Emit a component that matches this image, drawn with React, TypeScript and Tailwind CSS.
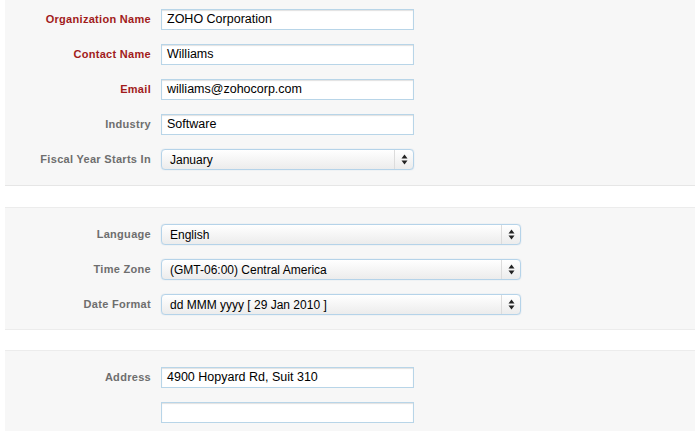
import type { ReactNode } from "react";

type Field = {
  label: string;
  value?: string;
  required?: boolean;
  kind?: "text" | "select";
  wide?: boolean;
};

const orgFields: Field[] = [
  { label: "Organization Name", value: "ZOHO Corporation", required: true },
  { label: "Contact Name", value: "Williams", required: true },
  { label: "Email", value: "williams@zohocorp.com", required: true },
  { label: "Industry", value: "Software" },
  { label: "Fiscal Year Starts In", value: "January", kind: "select" },
];

const localeFields: Field[] = [
  { label: "Language", value: "English", kind: "select", wide: true },
  { label: "Time Zone", value: "(GMT-06:00) Central America", kind: "select", wide: true },
  { label: "Date Format", value: "dd MMM yyyy [ 29 Jan 2010 ]", kind: "select", wide: true },
];

const addressFields: Field[] = [
  { label: "Address", value: "4900 Hopyard Rd, Suit 310" },
  { label: "", value: "" },
];

function UpDown() {
  return (
    <svg width="7" height="11" viewBox="0 0 7 11">
      <path d="M3.5 0.5 L6.5 4.5 L0.5 4.5 Z" fill="#222" />
      <path d="M3.5 10.5 L6.5 6.5 L0.5 6.5 Z" fill="#222" />
    </svg>
  );
}

function TextBox({ value }: { value?: string }) {
  return (
    <div className="flex h-[21px] w-[253px] items-center border border-[#b8d5e8] bg-white pl-[5px] text-[12.5px] text-black shadow-[inset_0_1px_1px_rgba(0,0,0,0.12)]">
      {value}
    </div>
  );
}

function SelectBox({ value, wide }: { value?: string; wide?: boolean }) {
  return (
    <div
      className={`flex h-[21px] items-stretch rounded-[4px] border border-[#b5d3e9] bg-gradient-to-b from-white to-[#ececec] text-[12px] text-black shadow-[0_0_1px_rgba(120,170,210,0.6)] ${
        wide ? "w-[360px]" : "w-[253px]"
      }`}
    >
      <div className="flex flex-1 items-center pl-[8px]">{value}</div>
      <div className="flex w-[19px] items-center justify-center border-l border-[#dcdcdc]">
        <UpDown />
      </div>
    </div>
  );
}

function Row({ f }: { f: Field }) {
  return (
    <>
      <div
        className={`flex h-[21px] items-center justify-end text-[11px] font-bold tracking-[0.3px] ${
          f.required ? "text-[#a11b1b]" : "text-[#6e6e6e]"
        }`}
      >
        {f.label}
      </div>
      {f.kind === "select" ? <SelectBox value={f.value} wide={f.wide} /> : <TextBox value={f.value} />}
    </>
  );
}

function Panel({ children, className = "" }: { children: ReactNode; className?: string }) {
  return (
    <div className={`mx-[5px] bg-[#f7f7f7] ${className}`}>
      <div className="grid grid-cols-[146px_1fr] gap-x-[10px] gap-y-[14px]">{children}</div>
    </div>
  );
}

export default function App() {
  return (
    <div
      className="h-[431px] w-[700px] overflow-hidden bg-white"
      style={{ fontFamily: '"Liberation Sans", Arial, sans-serif' }}
    >
      <Panel className="border-b border-[#e6e6e6] pb-[15px] pt-[9px]">
        {orgFields.map((f) => (
          <Row key={f.label} f={f} />
        ))}
      </Panel>
      <Panel className="mt-[21px] border-y border-[#ececec] pb-[14px] pt-[16px]">
        {localeFields.map((f) => (
          <Row key={f.label} f={f} />
        ))}
      </Panel>
      <Panel className="mt-[20px] border-t border-[#ececec] pb-[14px] pt-[16px]">
        {addressFields.map((f, i) => (
          <Row key={i} f={f} />
        ))}
      </Panel>
    </div>
  );
}
